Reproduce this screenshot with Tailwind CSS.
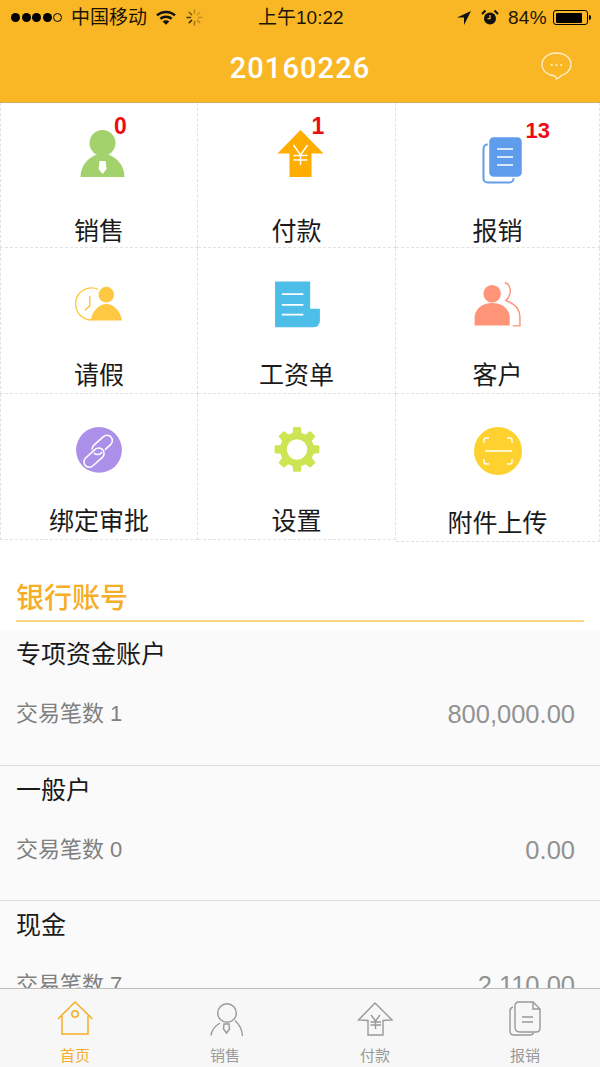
<!DOCTYPE html>
<html lang="en">
  <head>
    <meta charset="UTF-8" />
    <meta name="viewport" content="width=device-width, initial-scale=1.0" />
    <title>20160226</title>
    <script src="https://cdn.jsdelivr.net/npm/@tailwindcss/browser@4"></script>
  </head>
  <body class="bg-white">
    <div class="w-[600px] h-[1067px] flex flex-col overflow-hidden font-['Liberation_Sans','Noto_Sans_CJK_SC',sans-serif]">
      <!-- header -->
      <header class="h-[103px] shrink-0 bg-[#f9b725] border-b border-[#d3ab62]">
        <div class="h-[35px] flex items-center text-[19px] text-[#1c1504]">
          <div class="w-[258px] pl-[11px] flex items-center">
            <span class="flex gap-[1.5px]">
              <i class="w-[9px] h-[9px] rounded-full bg-black"></i>
              <i class="w-[9px] h-[9px] rounded-full bg-black"></i>
              <i class="w-[9px] h-[9px] rounded-full bg-black"></i>
              <i class="w-[9px] h-[9px] rounded-full bg-black"></i>
              <i class="w-[9px] h-[9px] rounded-full border border-black"></i>
            </span>
            <span class="ml-[9px] leading-[24px]">中国移动</span>
            <svg class="ml-[9px]" width="20" height="15" viewBox="0 0 20 15" fill="none" stroke="#111" stroke-width="2.6">
              <path d="M1 5.4C6 .8 14 .8 19 5.4" />
              <path d="M4.4 8.8C7.5 6 12.5 6 15.6 8.8" />
              <path d="M10 14.8L6.6 11.4C8.6 9.8 11.4 9.8 13.4 11.4Z" fill="#111" stroke="none" />
            </svg>
            <svg class="ml-[10px]" width="17" height="17" viewBox="0 0 17 17" stroke="#2a2006" stroke-width="1.5" stroke-linecap="round">
              <path d="M8.5 1V4.5" opacity=".3" /><path d="M13.8 3.2L11.4 5.6" opacity=".2" /><path d="M16 8.5H12.5" opacity=".25" />
              <path d="M13.8 13.8L11.4 11.4" opacity=".3" /><path d="M8.5 16V12.5" opacity=".45" /><path d="M3.2 13.8L5.6 11.4" opacity=".95" />
              <path d="M1 8.5H4.5" opacity=".85" /><path d="M3.2 3.2L5.6 5.6" opacity=".6" />
            </svg>
          </div>
          <div class="w-[89px] whitespace-nowrap leading-[24px]">上午10:22</div>
          <div class="flex-1 flex items-center justify-end pr-[9px]">
            <svg width="14" height="14" viewBox="0 0 14 14" fill="#111"><path d="M14 0L0 6.5H7V14Z" /></svg>
            <svg class="ml-[10px]" width="18" height="17" viewBox="0 0 18 17">
              <circle cx="9" cy="9.5" r="6" fill="#111" />
              <path d="M9 6V9.7H6.5" fill="none" stroke="#f9b725" stroke-width="1.3" />
              <path d="M1 5L4.5 1.5M17 5L13.5 1.5" stroke="#111" stroke-width="2.2" />
            </svg>
            <span class="ml-[9px] w-[38px] whitespace-nowrap tracking-[0.3px] leading-[24px]">84%</span>
            <span class="ml-[7px] w-[35px] h-[15px] border border-black rounded-[3px] p-[1.5px] flex">
              <i class="w-[26px] bg-black rounded-[1px]"></i>
            </span>
            <i class="w-[2px] h-[5px] bg-black rounded-r-[2px] ml-px"></i>
          </div>
        </div>
        <div class="relative h-[67px] flex items-center justify-center">
          <h1 class="text-[29px] leading-[40px] font-medium tracking-[1.1px] text-white font-['Roboto',sans-serif] -mt-[2px]">20160226</h1>
          <svg class="absolute left-[541px] top-[17px]" width="31" height="28" viewBox="0 0 31 28" fill="none" stroke="#fff" stroke-opacity=".75" stroke-width="1.3">
            <path d="M15.5 1C23.5 1 30 6 30 12.5C30 19 24 22.5 20.5 23.5C19 25 17.5 26.5 15.5 27C15.5 25.5 15 24.5 14 24C7 23.5 1 19 1 12.5C1 6 7.5 1 15.5 1Z" />
            <path d="M10 13H11.6M14.7 13H16.3M19.4 13H21" stroke-width="1.8" />
          </svg>
        </div>
      </header>

      <main class="flex-1 min-h-0 overflow-hidden">
        <!-- menu grid -->
        <section class="grid grid-cols-[198px_198px_204px] grid-rows-[145px_146px_146px]">
          <a class="h-[145px] border-x border-b border-dashed border-[#e2e2e2] pt-[14px] flex flex-col items-center">
            <div class="relative w-20 h-20">
              <svg width="80" height="80" viewBox="0 0 80 80">
                <circle cx="43.5" cy="26" r="13" fill="#a3d26c" />
                <path d="M21.5 60C21.5 48 30 40 38 37.5H49C57 40 65.5 48 65.5 60Z" fill="#a3d26c" />
                <path d="M40.5 44H46.5L47.5 52L43.5 57L39.5 52Z" fill="#fff" />
              </svg>
              <span class="absolute left-[55px] -top-[2px] text-[23px] leading-[23px] font-bold text-[#ee0c13]">0</span>
            </div>
            <span class="mt-[16px] text-[25px] leading-9 text-[#1a1a1a]">销售</span>
          </a>
          <a class="h-[145px] border-r border-b border-dashed border-[#e2e2e2] pt-[14px] flex flex-col items-center">
            <div class="relative w-20 h-20">
              <svg width="80" height="80" viewBox="0 0 80 80">
                <path d="M43.5 13L66.5 36.5H54.5V60H32.5V36.5H20.5Z" fill="#ffad00" />
                <path d="M36.5 28L43.5 38L50.5 28M36.5 38.5H50.5M36.5 43H50.5M43.5 38V48" fill="none" stroke="#fff" stroke-width="1.4" />
              </svg>
              <span class="absolute left-[55px] -top-[2px] text-[23px] leading-[23px] font-bold text-[#ee0c13]">1</span>
            </div>
            <span class="mt-[16px] text-[25px] leading-9 text-[#1a1a1a]">付款</span>
          </a>
          <a class="h-[145px] border-r border-b border-dashed border-[#e2e2e2] pt-[14px] flex flex-col items-center">
            <div class="relative w-20 h-20">
              <svg width="80" height="80" viewBox="0 0 80 80">
                <rect x="25.5" y="27.5" width="30" height="38" rx="4" fill="none" stroke="#639eea" stroke-width="2" />
                <rect x="30.5" y="19.5" width="34" height="41" rx="5" fill="#5f9cec" stroke="#fff" stroke-width="1.5" />
                <path d="M39 32H55M39 40H55M39 48H55" stroke="#fff" stroke-width="1.5" />
              </svg>
              <span class="absolute left-[68px] top-[3px] text-[22px] leading-[22px] font-bold text-[#ee0c13]">13</span>
            </div>
            <span class="mt-[16px] text-[25px] leading-9 text-[#1a1a1a]">报销</span>
          </a>

          <a class="h-[146px] border-x border-b border-dashed border-[#e2e2e2] pt-[14px] flex flex-col items-center">
            <svg width="80" height="80" viewBox="0 0 80 80">
              <path d="M39 28C37 27 35 26.5 32.5 26.5C23 26.5 16 34 16 43C16 52 23 59.5 32.5 59.5" fill="none" stroke="#ffc843" stroke-width="1.4" />
              <path d="M30.5 35V45L25.5 49.5" fill="none" stroke="#ffc843" stroke-width="1.6" />
              <circle cx="47.5" cy="33.5" r="8" fill="#ffc843" />
              <path d="M31.5 60C33 50 40 43 47.5 43C55 43 62 50 63.5 60Z" fill="#ffc843" />
            </svg>
            <span class="mt-[17px] text-[25px] leading-9 text-[#1a1a1a]">请假</span>
          </a>
          <a class="h-[146px] border-r border-b border-dashed border-[#e2e2e2] pt-[14px] flex flex-col items-center">
            <svg width="80" height="80" viewBox="0 0 80 80">
              <path d="M17.5 20H53.5V48H63.5V60Q63.5 67 56 67H17.5Z" fill="#4dbee8" />
              <path d="M24.5 33H46.5M24.5 44H46.5M24.5 54H46.5" stroke="#fff" stroke-width="1.8" />
            </svg>
            <span class="mt-[17px] text-[25px] leading-9 text-[#1a1a1a]">工资单</span>
          </a>
          <a class="h-[146px] border-r border-b border-dashed border-[#e2e2e2] pt-[14px] flex flex-col items-center">
            <svg width="80" height="80" viewBox="0 0 80 80">
              <circle cx="34" cy="32.5" r="9" fill="#ff9478" />
              <path d="M16 65V57C16 48 24 42 34 42C44 42 52 48 52 57V65Z" fill="#ff9478" />
              <path d="M47 21C53 23 55.5 32 48 39.5C58 43 62.5 49 62.5 56V65.5H55" fill="none" stroke="#ff9478" stroke-width="1.5" />
            </svg>
            <span class="mt-[17px] text-[25px] leading-9 text-[#1a1a1a]">客户</span>
          </a>

          <a class="h-[146px] border-x border-b border-dashed border-[#e2e2e2] pt-[14px] flex flex-col items-center">
            <svg width="80" height="80" viewBox="0 0 80 80">
              <circle cx="40" cy="43" r="23.5" fill="#ab8fe8" />
              <g transform="rotate(-42 39.5 44)" fill="none" stroke-width="1.6">
                <rect x="34.5" y="36.5" width="24" height="11" rx="5.5" stroke="#fff" />
                <rect x="19.5" y="40.5" width="24" height="11" rx="5.5" stroke="#ab8fe8" stroke-width="3.6" />
                <rect x="19.5" y="40.5" width="24" height="11" rx="5.5" stroke="#fff" />
              </g>
            </svg>
            <span class="mt-[17px] text-[25px] leading-9 text-[#1a1a1a]">绑定审批</span>
          </a>
          <a class="h-[146px] border-r border-b border-dashed border-[#e2e2e2] pt-[14px] flex flex-col items-center">
            <svg width="80" height="80" viewBox="0 0 80 80" fill="#cde552">
              <circle cx="40" cy="42.5" r="17.5" />
              <path id="tooth" d="M36 20.5Q36 19.5 37 19.5H43Q44 19.5 44 20.5L45 30H35Z" />
              <path d="M36 20.5Q36 19.5 37 19.5H43Q44 19.5 44 20.5L45 30H35Z" transform="rotate(45 40 42.5)" />
              <path d="M36 20.5Q36 19.5 37 19.5H43Q44 19.5 44 20.5L45 30H35Z" transform="rotate(90 40 42.5)" />
              <path d="M36 20.5Q36 19.5 37 19.5H43Q44 19.5 44 20.5L45 30H35Z" transform="rotate(135 40 42.5)" />
              <path d="M36 20.5Q36 19.5 37 19.5H43Q44 19.5 44 20.5L45 30H35Z" transform="rotate(180 40 42.5)" />
              <path d="M36 20.5Q36 19.5 37 19.5H43Q44 19.5 44 20.5L45 30H35Z" transform="rotate(225 40 42.5)" />
              <path d="M36 20.5Q36 19.5 37 19.5H43Q44 19.5 44 20.5L45 30H35Z" transform="rotate(270 40 42.5)" />
              <path d="M36 20.5Q36 19.5 37 19.5H43Q44 19.5 44 20.5L45 30H35Z" transform="rotate(315 40 42.5)" />
              <circle cx="40" cy="42.5" r="10.5" fill="#fff" />
            </svg>
            <span class="mt-[17px] text-[25px] leading-9 text-[#1a1a1a]">设置</span>
          </a>
          <a class="h-[148px] border-r border-b border-dashed border-[#e2e2e2] pt-[14px] flex flex-col items-center">
            <svg width="80" height="80" viewBox="0 0 80 80">
              <circle cx="40" cy="43" r="24" fill="#ffd12f" />
              <path d="M26 35V32Q26 30 28 30H31M49 30H52Q54 30 54 32V35M26 51V54Q26 56 28 56H31M49 56H52Q54 56 54 54V51" fill="none" stroke="#fff" stroke-width="1.3" />
              <path d="M27 43H54" stroke="#fff" stroke-width="1.5" />
            </svg>
            <span class="mt-[17px] text-[25px] leading-9 text-[#1a1a1a]">附件上传</span>
          </a>
        </section>

        <!-- bank accounts -->
        <h2 class="mx-4 pt-[39px] pb-[1px] text-[28px] leading-[40px] font-medium text-[#f5ae26] border-b-2 border-[#f9d67f]">银行账号</h2>
        <section class="mt-2 bg-[#fafafa]">
          <div class="h-[136px] pt-[6px] pl-[16px] pr-[25px] border-b border-[#dcdcdc]">
            <div class="text-[25px] leading-9 text-[#1a1a1a]">专项资金账户</div>
            <div class="mt-6 flex justify-between items-center leading-9">
              <span class="text-[22px] text-[#808080]">交易笔数 1</span>
              <span class="text-[25.5px] text-[#929292]">800,000.00</span>
            </div>
          </div>
          <div class="h-[135px] pt-[6px] pl-[16px] pr-[25px] border-b border-[#dcdcdc]">
            <div class="text-[25px] leading-9 text-[#1a1a1a]">一般户</div>
            <div class="mt-6 flex justify-between items-center leading-9">
              <span class="text-[22px] text-[#808080]">交易笔数 0</span>
              <span class="text-[25.5px] text-[#929292]">0.00</span>
            </div>
          </div>
          <div class="h-[135px] pt-[6px] pl-[16px] pr-[25px]">
            <div class="text-[25px] leading-9 text-[#1a1a1a]">现金</div>
            <div class="mt-6 flex justify-between items-center leading-9">
              <span class="text-[22px] text-[#808080]">交易笔数 7</span>
              <span class="text-[25.5px] text-[#929292]">2,110.00</span>
            </div>
          </div>
        </section>
      </main>

      <!-- tab bar -->
      <nav class="h-[79px] shrink-0 grid grid-cols-4 bg-[#f7f7f7] border-t border-[#bdbdbd] text-[15px] text-[#999]">
        <a class="pt-[10px] flex flex-col items-center text-[#f5ae26]">
          <svg width="40" height="40" viewBox="0 0 40 40" fill="none" stroke="#f5ae26" stroke-width="1.5">
            <path d="M3 20L20 3L37.5 20" />
            <path d="M7 17V35H33V17" />
            <circle cx="20" cy="15" r="3.2" />
          </svg>
          <span class="mt-[7px] leading-[20px]">首页</span>
        </a>
        <a class="pt-[10px] flex flex-col items-center">
          <svg width="40" height="40" viewBox="0 0 40 40" fill="none" stroke="#999" stroke-width="1.4">
            <circle cx="22" cy="14" r="9.3" />
            <path d="M6 36.5C6.5 31 10 27 15 24" />
            <path d="M30 21.5C34 25 37 30 37.5 37" />
            <path d="M19 25H24L24.5 30L21.5 34L18.5 30Z" />
          </svg>
          <span class="mt-[7px] leading-[20px]">销售</span>
        </a>
        <a class="pt-[10px] flex flex-col items-center">
          <svg width="40" height="40" viewBox="0 0 40 40" fill="none" stroke="#999" stroke-width="1.4">
            <path d="M13 36V21.5L3.5 21L20 4L37 21L28 21.5V36Z" />
            <path d="M16 16L20.5 22L25 16M15.5 23H26M15.5 26H26M20.5 22V30" stroke-width="1.4" />
          </svg>
          <span class="mt-[7px] leading-[20px]">付款</span>
        </a>
        <a class="pt-[10px] flex flex-col items-center">
          <svg width="40" height="40" viewBox="0 0 40 40" fill="none" stroke="#999" stroke-width="1.4">
            <path d="M8 8Q5 9 5 12V32Q5 36 9 36H25Q28 36 28.5 33.5" />
            <path d="M14 3H28L35 10V29Q35 33 31 33H15Q10 33 10 28V7Q10 3 14 3Z" />
            <path d="M28 3V10H35M17 18H28M17 23H28" />
          </svg>
          <span class="mt-[7px] leading-[20px]">报销</span>
        </a>
      </nav>
    </div>
  </body>
</html>
